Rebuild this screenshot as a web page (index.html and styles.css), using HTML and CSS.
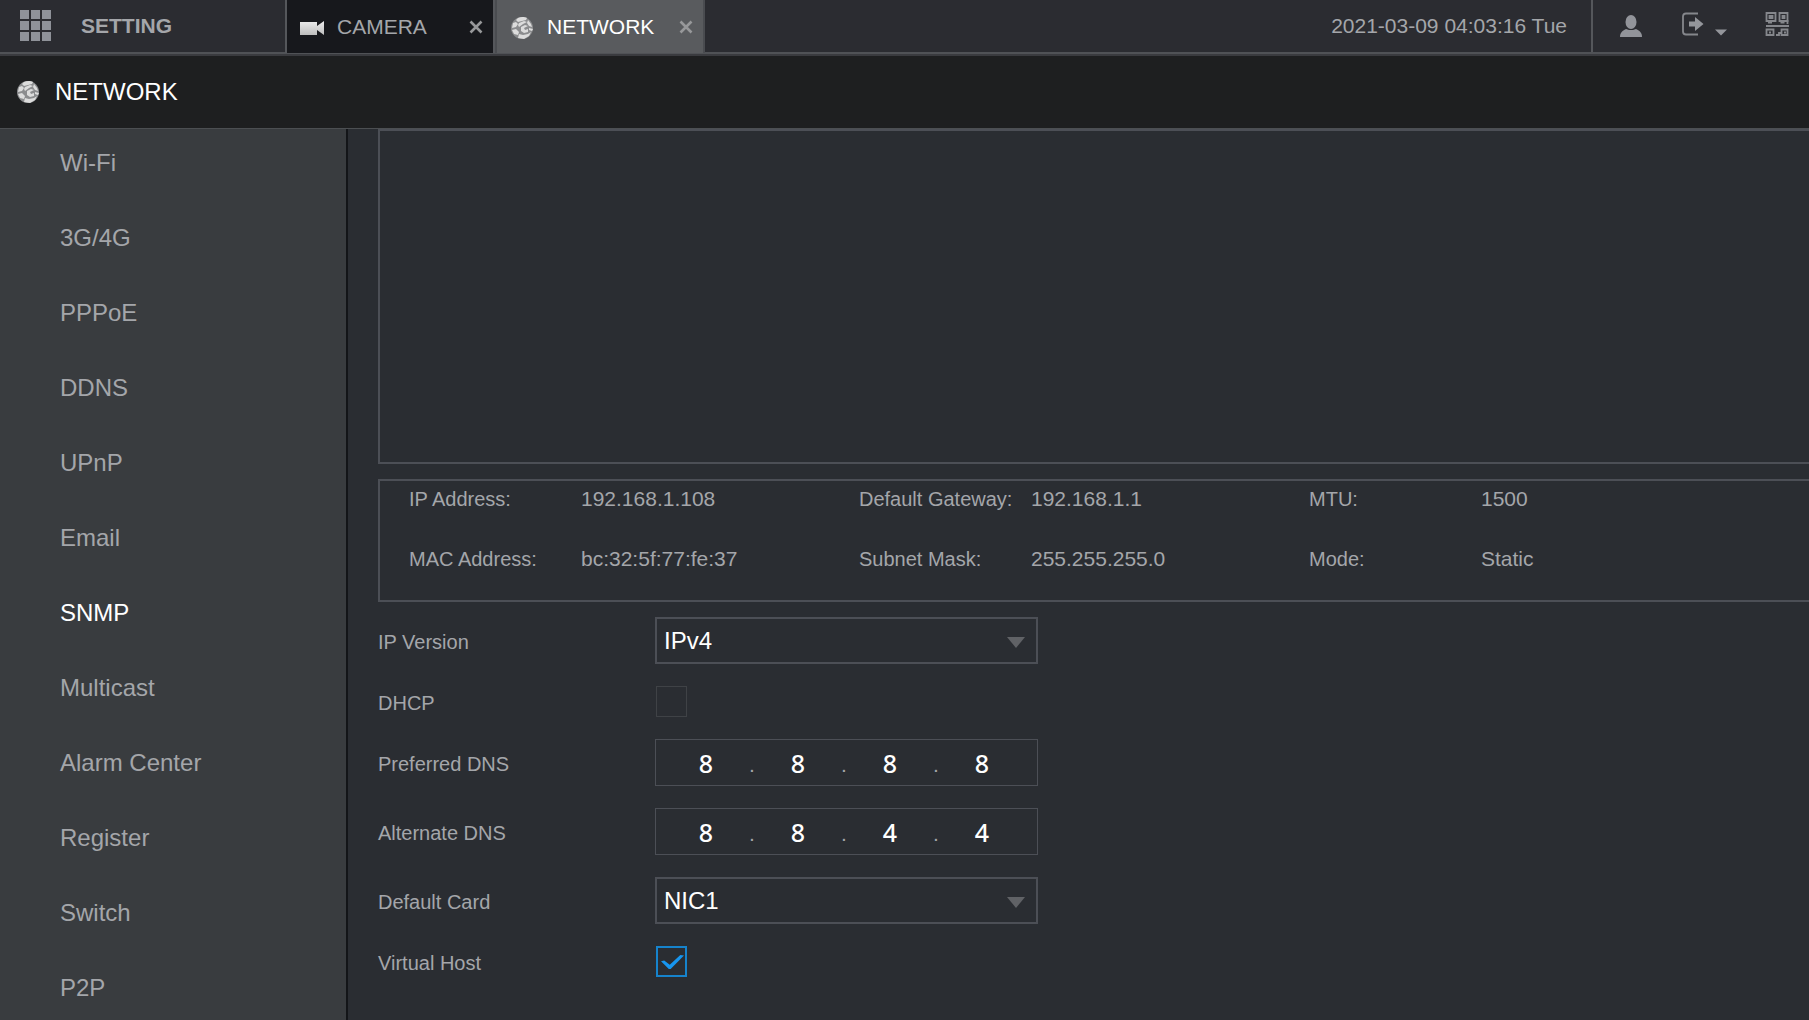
FILE: index.html
```html
<!DOCTYPE html>
<html lang="en">
<head>
<meta charset="utf-8">
<title>Setting - Network</title>
<link rel="stylesheet" href="styles.css">
</head>
<body>
<svg class="defs" width="0" height="0" aria-hidden="true">
  <defs>
    <linearGradient id="silver" x1="0" y1="0" x2="0" y2="1">
      <stop offset="0" stop-color="#ececec"/><stop offset="1" stop-color="#bdbdbd"/>
    </linearGradient>
    <symbol id="globe" viewBox="0 0 24 24">
      <circle cx="12" cy="12" r="11" fill="#8b8c8e"/>
      <g fill="#dcdcdc">
        <path d="M8 2c3-1.500 7-1 9 0l-1 2-4 1-4 1-2-2z"/>
        <path d="M3 7l3-1 2 2-2 3-4 1z"/>
        <path d="M9 7l5-2 3 1-4 2-4 3-1-2z"/>
        <path d="M18 4l3 4 1 3-3-1-2-3z"/>
        <path d="M2 14l4-1 3 3-1 3-4-1z"/>
        <path d="M11 11l4-2 3 1-4 2 1 2 3-1v3l-4 1-3-2z"/>
        <path d="M9 18l4 1 5-1 3-2-2 4-5 3-6-1z"/>
        <path d="M19 12l4 1-1 2-3-1z"/>
      </g>
    </symbol>
    <symbol id="close" viewBox="0 0 14 14">
      <path d="M1.500 1.500l11 11M12.500 1.500l-11 11" stroke="currentColor" stroke-width="2.600" fill="none"/>
    </symbol>
  </defs>
</svg>

<header class="topbar">
  <div class="home">
    <button class="icon-button" aria-label="Main menu">
      <svg width="31" height="31" viewBox="0 0 31 31" fill="#8f9299">
        <path d="M0 0h9v9H0zM11 0h9v9h-9zM22 0h9v9h-9zM0 11h9v9H0zM11 11h9v9h-9zM22 11h9v9h-9zM0 22h9v9H0zM11 22h9v9h-9zM22 22h9v9h-9z"/>
      </svg>
    </button>
    <span class="home-title">SETTING</span>
  </div>
  <nav class="tabs" aria-label="Open pages">
    <div class="tab">
      <svg class="tab-icon" width="24" height="24" viewBox="0 0 24 24" fill="url(#silver)"><path d="M0 6h17v4l7-5v14l-7-5v5H0z"/></svg>
      <a class="tab-link" href="#camera">CAMERA</a>
      <button class="icon-button tab-close" aria-label="Close camera"><svg width="14" height="14"><use href="#close"/></svg></button>
    </div>
    <div class="tab tab-active">
      <svg class="tab-icon" width="24" height="24"><use href="#globe"/></svg>
      <a class="tab-link" href="#network">NETWORK</a>
      <button class="icon-button tab-close" aria-label="Close network"><svg width="14" height="14"><use href="#close"/></svg></button>
    </div>
  </nav>
  <time class="clock" datetime="2021-03-09T04:03:16">2021-03-09 04:03:16 Tue</time>
  <div class="tools">
    <button class="icon-button" aria-label="User">
      <svg width="24" height="28" viewBox="0 0 24 28" fill="#92949a"><ellipse cx="12" cy="12" rx="5.500" ry="7"/><path d="M1 27c0-4 2-6 6-8l3 1h4l3-1c4 2 6 4 6 8z"/></svg>
    </button>
    <button class="icon-button" aria-label="Log out">
      <svg width="46" height="24" viewBox="0 0 46 24"><path d="M17 1.500H5Q2 1.500 2 4.500v15q0 3 3 3h12" fill="none" stroke="#85878c" stroke-width="1.800"/><path d="M8 9.500h6V5l8.500 7-8.500 7v-4.500H8z" fill="#94969b"/><path d="M34 17.500h12l-6 6z" fill="#94969b"/></svg>
    </button>
    <button class="icon-button" aria-label="QR code">
      <svg width="24" height="24" viewBox="0 0 24 24" fill="none" stroke="#85878c" stroke-width="1.800">
        <path d="M1.500 1h9v8h-9zM14.500 1h8v8h-8z"/>
        <path d="M4.500 4h3v2h-3zM17.500 4h2v2h-2z"/>
        <path d="M3 10.500h4M15.500 10.500h4M22.500 8v4M1 14h23"/>
        <path d="M1.500 17.500h7v5.500h-7zM16.500 17.500h6v5.500h-6zM4 20.500h2M19 20.500h2M11 23h3v-2h3"/>
      </svg>
    </button>
  </div>
</header>

<div class="page-head">
  <svg width="24" height="24"><use href="#globe"/></svg>
  <h1 class="page-title">NETWORK</h1>
</div>

<div class="layout">
  <nav class="sidebar" aria-label="Network settings">
    <a class="side-link" href="#wifi">Wi-Fi</a>
    <a class="side-link" href="#cell">3G/4G</a>
    <a class="side-link" href="#pppoe">PPPoE</a>
    <a class="side-link" href="#ddns">DDNS</a>
    <a class="side-link" href="#upnp">UPnP</a>
    <a class="side-link" href="#email">Email</a>
    <a class="side-link side-active" href="#snmp" aria-current="page">SNMP</a>
    <a class="side-link" href="#multicast">Multicast</a>
    <a class="side-link" href="#alarm">Alarm Center</a>
    <a class="side-link" href="#register">Register</a>
    <a class="side-link" href="#switch">Switch</a>
    <a class="side-link" href="#p2p">P2P</a>
  </nav>

  <main class="content">
    <section class="panel panel-list" aria-label="Network cards"></section>

    <dl class="panel info">
      <dt>IP Address:</dt><dd>192.168.1.108</dd>
      <dt>Default Gateway:</dt><dd>192.168.1.1</dd>
      <dt>MTU:</dt><dd>1500</dd>
      <dt>MAC Address:</dt><dd>bc:32:5f:77:fe:37</dd>
      <dt>Subnet Mask:</dt><dd>255.255.255.0</dd>
      <dt>Mode:</dt><dd>Static</dd>
    </dl>

    <form class="form">
      <label class="label" for="ip-version">IP Version</label>
      <div class="select-box">
        <select class="select" id="ip-version"><option>IPv4</option><option>IPv6</option></select>
        <span class="caret"></span>
      </div>

      <label class="label" for="dhcp">DHCP</label>
      <input class="check" type="checkbox" id="dhcp">

      <label class="label" for="dns1">Preferred DNS</label>
      <div class="ip">
        <input class="octet" id="dns1" value="8"><span class="dot">.</span>
        <input class="octet" aria-label="Preferred DNS, part 2" value="8"><span class="dot">.</span>
        <input class="octet" aria-label="Preferred DNS, part 3" value="8"><span class="dot">.</span>
        <input class="octet" aria-label="Preferred DNS, part 4" value="8">
      </div>

      <label class="label" for="dns2">Alternate DNS</label>
      <div class="ip">
        <input class="octet" id="dns2" value="8"><span class="dot">.</span>
        <input class="octet" aria-label="Alternate DNS, part 2" value="8"><span class="dot">.</span>
        <input class="octet" aria-label="Alternate DNS, part 3" value="4"><span class="dot">.</span>
        <input class="octet" aria-label="Alternate DNS, part 4" value="4">
      </div>

      <label class="label" for="card">Default Card</label>
      <div class="select-box">
        <select class="select" id="card"><option>NIC1</option><option>NIC2</option></select>
        <span class="caret"></span>
      </div>

      <label class="label" for="vhost">Virtual Host</label>
      <input class="check" type="checkbox" id="vhost" checked>
    </form>
  </main>
</div>
</body>
</html>
```
FILE: styles.css
```css
* { box-sizing: border-box; }

body {
  margin: 0;
  height: 100vh;
  display: flex;
  flex-direction: column;
  overflow: hidden;
  background: #2a2d32;
  color: #a4a6aa;
  font-family: "Liberation Sans", Arial, sans-serif;
  font-size: 21px;
}

a { color: inherit; text-decoration: none; }
svg { display: block; }
.defs { position: absolute; }

.icon-button {
  padding: 0;
  border: 0;
  background: none;
  color: inherit;
}

/* Top bar */
.topbar {
  flex: none;
  display: flex;
  height: 56px;
  background: #2b2c31;
  border-bottom: 2px solid #3a3b3f;
  box-shadow: inset 0 -2px #505256;
}
.home {
  display: flex;
  align-items: center;
  width: 285px;
  padding: 0 0 4px 20px;
  gap: 30px;
}
.home-title {
  font-weight: bold;
  padding-top: 2px;
}
.tabs { display: flex; height: 53px; }
.tab {
  display: flex;
  align-items: center;
  width: 210px;
  padding: 0 10px 0 13px;
  border: 0 solid #55575b;
  border-width: 0 2px;
  background: #17181c;
}
.tab-active {
  background: #595b5e;
  border-color: #36383c #4a4c50;
}
.tab-icon { margin: 2px 13px 0 0; }
.tab-link { flex: 1; }
.tab-close { color: #97989a; }
.tab-active .tab-link { color: #fff; }
.clock {
  margin-left: auto;
  padding-right: 24px;
  line-height: 52px;
}
.tools {
  display: flex;
  align-items: center;
  gap: 38px;
  height: 52px;
  padding: 0 20px 4px 26px;
  border-left: 2px solid #55575b;
}

/* Page title */
.page-head {
  flex: none;
  display: flex;
  align-items: center;
  gap: 15px;
  height: 73px;
  padding-left: 16px;
  background: #1e1f20;
  border-bottom: 1px solid #4c4f52;
}
.page-title {
  margin: 0;
  color: #fff;
  font-size: 24px;
  font-weight: normal;
}

.layout { flex: 1; display: flex; min-height: 0; }

/* Sidebar */
.sidebar {
  flex: none;
  display: flex;
  flex-direction: column;
  gap: 8px;
  width: 348px;
  overflow: hidden;
  background: #393c3f;
  border-right: 2px solid #131518;
}
.side-link {
  padding-left: 60px;
  font-size: 24px;
  line-height: 67px;
}
.side-active { color: #fff; }

/* Content */
.content {
  flex: 1;
  display: flex;
  flex-direction: column;
  gap: 15px;
  min-width: 0;
  padding-left: 30px;
}
.panel {
  flex: none;
  margin: 0;
  border: 2px solid #4c4f56;
  border-right: 0;
}
.panel-list { height: 335px; }
.info {
  display: grid;
  grid-template-columns: repeat(3, 172px 278px);
  row-gap: 24px;
  padding: 0 0 23px 29px;
  line-height: 36px;
}
.info dt { font-size: 20px; }
.info dd { margin: 0; }

/* Form */
.form {
  display: grid;
  grid-template-columns: 277px 383px;
  row-gap: 22px;
  align-items: center;
}
.label {
  padding-top: 4px;
  font-size: 20px;
}
.select-box { display: grid; align-items: center; }
.select-box > * { grid-area: 1 / 1; }
.select {
  appearance: none;
  width: 100%;
  height: 47px;
  padding: 0 40px 0 7px;
  border: 2px solid #4c4f56;
  border-radius: 0;
  background: none;
  color: #fff;
  font-family: inherit;
  font-size: 24px;
}
.caret {
  justify-self: end;
  margin: 4px 13px 0 0;
  border: solid transparent;
  border-width: 11px 9px 0;
  border-top-color: #606266;
  pointer-events: none;
}
.check {
  appearance: none;
  display: grid;
  width: 31px;
  height: 31px;
  margin: 0 0 0 1px;
  border: 1px solid #3f4246;
}
.check:checked { border: 2px solid #1683cc; }
.check:checked::before {
  content: "";
  margin: 7px 1px 6px 3px;
  background: #1795ee;
  clip-path: polygon(0 44%, 14% 40%, 38% 70%, 84% 0, 100% 4%, 42% 100%, 34% 100%);
}
.ip {
  display: flex;
  align-items: center;
  height: 47px;
  padding: 0 8px;
  border: 1px solid #4c4f56;
}
.octet {
  width: 84px;
  height: 43px;
  padding: 0;
  border: 0;
  background: none;
  color: #fff;
  font-family: "Noto Sans", sans-serif;
  font-size: 25px;
  font-weight: 500;
  text-align: center;
}
.dot {
  width: 8px;
  padding-top: 4px;
  text-align: center;
}
```
